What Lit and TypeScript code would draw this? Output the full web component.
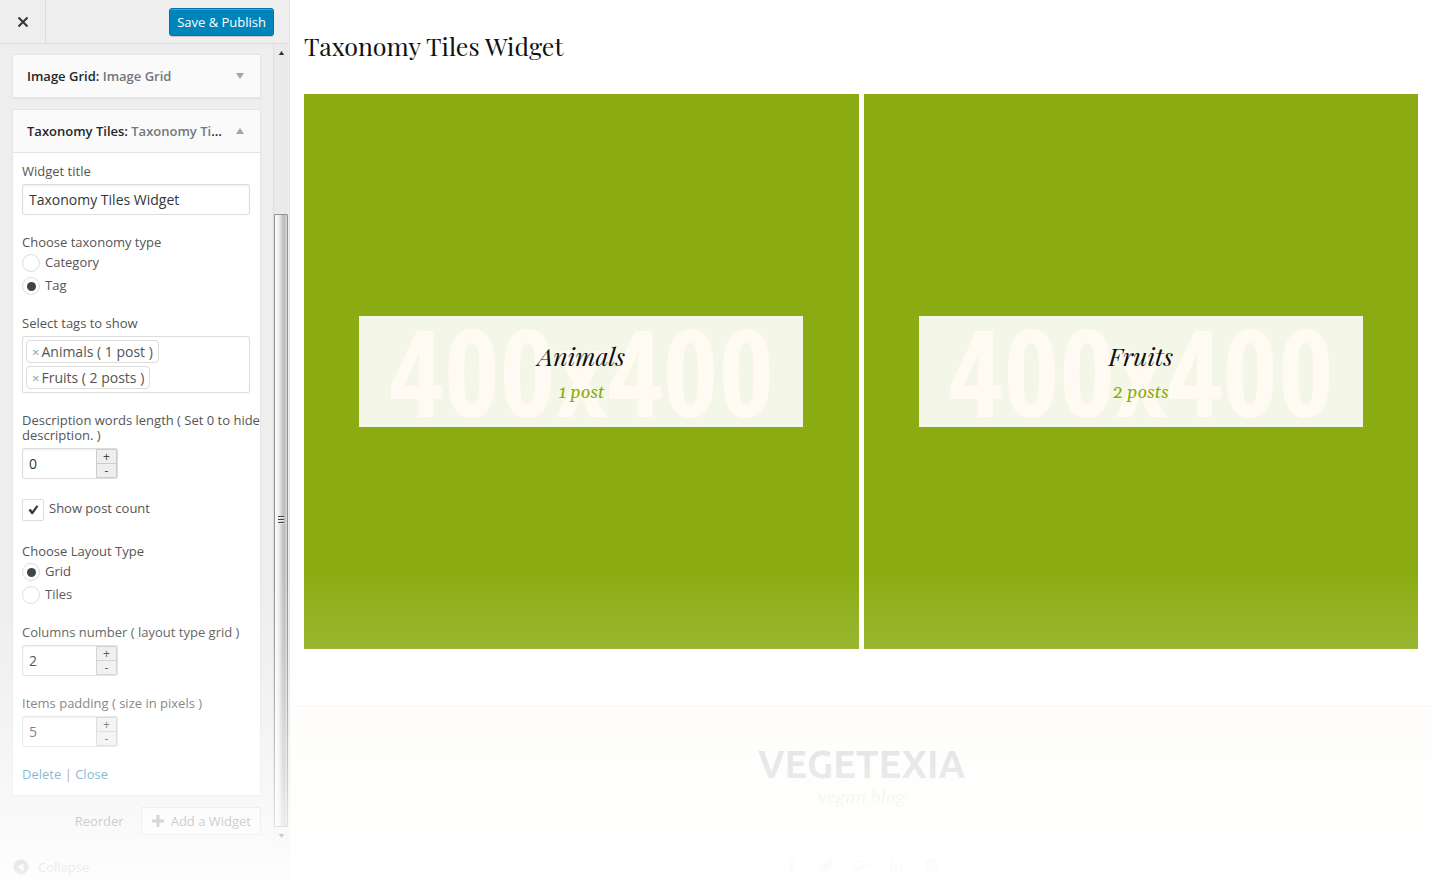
import { LitElement, html, css, svg } from "lit";
import { customElement, property } from "lit/decorators.js";

const base = css`
  *, *::before, *::after { box-sizing: border-box; }
  button, input { font: inherit; margin: 0; }
  a { text-decoration: none; }
`;

@customElement("number-field")
class NumberField extends LitElement {
  @property() label = "";
  @property({ type: Number }) value = 0;

  static styles = [base, css`
    :host { display: block; }
    .label { display: block; line-height: 15px; margin-bottom: 5px; }
    .box { display: flex; width: 96px; height: 31px; border: 1px solid #ddd; border-radius: 2px; background: #fff; box-shadow: inset 0 1px 2px rgba(0, 0, 0, 0.07); }
    .value { flex: 1; min-width: 0; border: 0; background: none; padding: 0 6px; font-size: 14px; color: #32373c; appearance: textfield; outline: none; }
    .value::-webkit-inner-spin-button { appearance: none; margin: 0; }
    .steps { display: flex; flex-direction: column; width: 21px; border: 1px solid #ccc; border-radius: 0 2px 2px 0; }
    .step { flex: 1; border: 0; padding: 0; background: #eee; font-size: 12px; line-height: 12px; color: #444; }
    .step + .step { border-top: 1px solid #ccc; }
  `];

  private step(by: number) { this.value = this.value + by; }

  render() {
    return html`
      <label class="label" for="value">${this.label}</label>
      <div class="box">
        <input class="value" id="value" type="number" .value=${String(this.value)} />
        <div class="steps">
          <button class="step" @click=${() => this.step(1)}>+</button>
          <button class="step" @click=${() => this.step(-1)}>-</button>
        </div>
      </div>`;
  }
}

@customElement("taxonomy-tile")
class TaxonomyTile extends LitElement {
  @property() name = "";
  @property() count = "";

  static styles = [base, css`
    :host { display: block; }
    .tile { display: grid; place-items: center; aspect-ratio: 1; background: #8aac12; overflow: hidden; }
    .size, .card { grid-area: 1 / 1; }
    .size { font: bold 120px/1 "Open Sans Condensed", "Roboto Condensed", "Ubuntu Condensed", "Liberation Sans Narrow", "Liberation Sans", sans-serif; color: #ffc87d; }
    .card { z-index: 1; display: flex; flex-direction: column; align-items: center; justify-content: center; width: 80%; height: 20%; padding-top: 8px; background: rgba(255, 255, 255, 0.9); }
    .name { margin: 0; font: italic 25px/36px "Playfair Display", "Liberation Serif", serif; color: #111; }
    .count { font: italic 18px/38px Georgia, Gelasio, "Liberation Serif", serif; color: #8aac12; }
  `];

  render() {
    return html`
      <article class="tile">
        <span class="size">400x400</span>
        <div class="card">
          <h3 class="name">${this.name}</h3>
          <a class="count" href="#">${this.count}</a>
        </div>
      </article>`;
  }
}

@customElement("widget-panel")
class WidgetPanel extends LitElement {
  static styles = [base, css`
    :host { display: flex; flex-direction: column; background: #eee; color: #555; font: 13px/16px "Open Sans", sans-serif; }
    .top { display: flex; align-items: center; justify-content: space-between; height: 44px; border-bottom: 1px solid #ddd; padding-right: 15px; }
    .close { display: grid; place-items: center; width: 46px; height: 43px; border: 0; border-right: 1px solid #ddd; background: none; padding: 0; }
    .save { height: 28px; padding: 0 7px; border: 1px solid #0073aa; border-radius: 3px; background: #0085ba; box-shadow: inset 0 1px 0 rgba(120, 200, 230, 0.5), 0 1px 0 rgba(0, 0, 0, 0.15); color: #fff; line-height: 26px; }
    .area { flex: 1; display: flex; }
    .list { flex: 1; min-width: 0; padding: 10px 12px 8px 12px; }
    .widget { border: 1px solid #e5e5e5; background: #fff; box-shadow: 0 1px 1px rgba(0, 0, 0, 0.04); margin-bottom: 11px; }
    .head { display: flex; align-items: center; justify-content: space-between; width: 100%; height: 42px; border: 0; padding: 0 16px 0 14px; background: #fafafa; text-align: left; font-weight: 600; color: #23282d; }
    .head.open { height: 43px; border-bottom: 1px solid #e5e5e5; }
    .title { width: 196px; overflow: hidden; text-overflow: ellipsis; white-space: nowrap; }
    .sub { color: #72777c; }
    .form { display: flex; flex-direction: column; gap: 20px; padding: 11px 0 13px 9px; }
    .group { margin: 0; padding: 0; border: 0; min-width: 0; }
    .label { display: block; padding: 0; line-height: 15px; margin-bottom: 5px; }
    .text, .tags { width: 100%; max-width: 228px; }
    .text { display: block; height: 31px; border: 1px solid #ddd; border-radius: 2px; padding: 0 6px; font-size: 14px; color: #32373c; box-shadow: inset 0 1px 2px rgba(0, 0, 0, 0.07); outline: none; }
    legend.label { margin-bottom: 3px; }
    .options { display: grid; gap: 3px; }
    .option { display: flex; gap: 5px; line-height: 18px; height: 20px; }
    .radio { appearance: none; display: grid; place-items: center; width: 18px; height: 18px; margin-top: 1px; border: 1px solid #ddd; border-radius: 50%; background: #fff; }
    .radio:checked::before { content: ""; width: 9px; height: 9px; border-radius: 50%; background: #444; }
    .tags { display: flex; flex-direction: column; align-items: flex-start; gap: 3px; border: 1px solid #ddd; border-radius: 2px; padding: 3px; height: 57px; }
    .tag { display: flex; align-items: center; gap: 2px; height: 23px; padding: 0 5px; border: 1px solid #ddd; border-radius: 4px; font-size: 14px; }
    .remove { border: 0; padding: 0; background: none; color: #999; font-size: 13px; }
    .check-row { display: flex; gap: 5px; height: 25px; line-height: 18px; }
    .check { position: relative; width: 22px; height: 22px; }
    .tick { appearance: none; display: block; width: 22px; height: 22px; border: 1px solid #ddd; border-radius: 2px; background: #fff; }
    .mark { position: absolute; inset: 0; pointer-events: none; }
    .links { line-height: 15px; }
    .link { color: #0073aa; }
    .actions { display: flex; align-items: center; justify-content: flex-end; gap: 17px; }
    .reorder { border: 0; background: none; padding: 0; color: #555; }
    .add { display: flex; align-items: center; gap: 6px; height: 28px; padding: 0 9px 0 9px; border: 1px solid #ccc; border-radius: 2px; background: #f7f7f7; color: #555; }
    .bar { display: flex; flex-direction: column; align-items: center; width: 16px; margin-bottom: 4px; background: #eaeaea; border-left: 1px solid #ddd; border-right: 1px solid #eee; }
    .arrow { display: grid; place-items: center; width: 14px; height: 17px; }
    .before { flex: 1; }
    .thumb { flex: 4; display: grid; place-items: center; width: 14px; border: 1px solid #929292; border-radius: 1px; background: linear-gradient(90deg, #fdfdfd, #ececee 35%, #c9c9cb 60%, #bcbcbe 80%, #dedee0); }
    .foot { display: flex; align-items: center; height: 38px; }
    .collapse { display: flex; align-items: center; gap: 9px; border: 0; background: none; padding: 0 13px; color: #72777c; }
  `];

  private radio(group: string, text: string, checked: boolean) {
    return html`<label class="option"><input class="radio" type="radio" name=${group} ?checked=${checked} />${text}</label>`;
  }

  private triangle(up: boolean, w: number, h: number, color: string) {
    return svg`<svg width=${w} height=${h} viewBox="0 0 8 6"><path d=${up ? "M0 6L4 0L8 6Z" : "M0 0H8L4 6Z"} fill=${color} /></svg>`;
  }

  render() {
    return html`
      <header class="top">
        <button class="close" aria-label="Close">
          <svg width="12" height="12" viewBox="0 0 12 12"><path d="M1.5 1.5L10.5 10.5M10.5 1.5L1.5 10.5" stroke="#32373c" stroke-width="2" /></svg>
        </button>
        <button class="save">Save &amp; Publish</button>
      </header>
      <div class="area">
        <div class="list">
          <section class="widget">
            <button class="head"><span class="title">Image Grid: <span class="sub">Image Grid</span></span>${this.triangle(false, 8, 6, "#a0a5aa")}</button>
          </section>
          <section class="widget">
            <button class="head open"><span class="title">Taxonomy Tiles: <span class="sub">Taxonomy Tiles Widget</span></span>${this.triangle(true, 8, 6, "#a0a5aa")}</button>
            <div class="form">
              <div class="group">
                <label class="label" for="title">Widget title</label>
                <input class="text" id="title" type="text" value="Taxonomy Tiles Widget" />
              </div>
              <fieldset class="group">
                <legend class="label">Choose taxonomy type</legend>
                <div class="options">${this.radio("taxonomy", "Category", false)}${this.radio("taxonomy", "Tag", true)}</div>
              </fieldset>
              <div class="group">
                <span class="label">Select tags to show</span>
                <div class="tags">
                  <span class="tag"><button class="remove">×</button>Animals ( 1 post )</span>
                  <span class="tag"><button class="remove">×</button>Fruits ( 2 posts )</span>
                </div>
              </div>
              <number-field label="Description words length ( Set 0 to hide description. )" .value=${0}></number-field>
              <label class="check-row">
                <span class="check">
                  <input class="tick" type="checkbox" checked />
                  <svg class="mark" viewBox="0 0 22 22"><path d="M6.5 11.2L8.5 9.8L10.3 12L14.6 6.2L16.4 7.3L10.8 15.3H9.7Z" fill="#32373c" /></svg>
                </span>
                Show post count
              </label>
              <fieldset class="group">
                <legend class="label">Choose Layout Type</legend>
                <div class="options">${this.radio("layout", "Grid", true)}${this.radio("layout", "Tiles", false)}</div>
              </fieldset>
              <number-field label="Columns number ( layout type grid )" .value=${2}></number-field>
              <number-field label="Items padding ( size in pixels )" .value=${5}></number-field>
              <div class="links"><a class="link" href="#">Delete</a> | <a class="link" href="#">Close</a></div>
            </div>
          </section>
          <div class="actions">
            <button class="reorder">Reorder</button>
            <button class="add">
              <svg width="14" height="14" viewBox="0 0 14 14"><path d="M7 1V13M1 7H13" stroke="#72777c" stroke-width="3" /></svg>
              Add a Widget
            </button>
          </div>
        </div>
        <div class="bar">
          <span class="arrow">${this.triangle(true, 7, 4, "#333")}</span>
          <span class="before"></span>
          <span class="thumb"><svg width="8" height="8" viewBox="0 0 8 8"><path d="M1 .5H7M1 3.5H7M1 6.5H7" stroke="#444" /><path d="M1 1.5H7M1 4.5H7M1 7.5H7" stroke="#eee" /></svg></span>
          <span class="arrow">${this.triangle(false, 7, 4, "#333")}</span>
        </div>
      </div>
      <footer class="foot">
        <button class="collapse">
          <svg width="16" height="16" viewBox="0 0 16 16"><circle cx="8" cy="8" r="7.5" fill="#72777c" /><path d="M10.5 4V12L4.5 8Z" fill="#eee" /></svg>
          Collapse
        </button>
      </footer>`;
  }
}

@customElement("app-root")
class AppRoot extends LitElement {
  static styles = [base, css`
    :host { position: relative; display: flex; min-height: 100vh; background: #fff; overflow: hidden; }
    .panel { flex: 0 0 289px; }
    .preview { flex: 1; min-width: 0; display: flex; flex-direction: column; border-left: 1px solid #e4e4e4; }
    .content { padding: 27px 15px 56px 14px; }
    .heading { margin: 0 0 29px; font: 25px/38px "Playfair Display", "Liberation Serif", serif; color: #111; }
    .tiles { display: grid; grid-template-columns: 1fr 1fr; gap: 5px; }
    .site-foot { flex: 1; display: flex; flex-direction: column; border-top: 2px solid #faf9f5; }
    .site-id { display: flex; flex-direction: column; align-items: center; background: #fefdfa; padding: 37px 0 40px; }
    .brand { font: bold 38px/40px Ubuntu, "Noto Sans", sans-serif; color: #d3d3d6; }
    .tagline { font: italic 18px/28px Georgia, Gelasio, "Liberation Serif", serif; color: #ebebd5; }
    .social { display: flex; justify-content: center; gap: 20px; padding-top: 6px; }
    .icon { display: block; width: 15px; height: 15px; fill: #e6e6e6; }
    .fade { position: absolute; z-index: 2; inset: auto 0 0 0; height: 316px; pointer-events: none; background: linear-gradient(rgba(255, 255, 255, 0), rgba(255, 255, 255, 0.13) 25%, rgba(255, 255, 255, 0.5) 64%, rgba(255, 255, 255, 0.7) 80%, rgba(255, 255, 255, 0.85) 94%, rgba(255, 255, 255, 0.95)); }
  `];

  private icons = [
    "M11 1.2V3.4H9.8Q8.7 3.4 8.7 4.5V6H11L10.7 8.4H8.7V14.5H6.2V8.4H4V6H6.2V4.2Q6.2 1 9.2 1Z",
    "M14.5 3.4L13 4.9Q13 13.5 5.2 13.5Q2.5 13.5.6 12.3Q3 12.4 4.8 11.1Q2.8 10.9 2.1 9.1H3.4Q1 8.2 1.1 6L2.4 6.3Q.5 4.6 1.6 2.5Q4 5.3 7.5 5.5Q7.2 2 10.2 2Q11.4 2 12.2 2.9L14 2.2L12.9 3.8Z",
    "M5 6.5H9.6Q10.2 12.5 5 12.7A5.2 5.2 0 1 1 8.5 3.6L7.1 5A3.2 3.2 0 1 0 7.5 8.4H5ZM12 5.5H13.4V7H15V8.4H13.4V10H12V8.4H10.5V7H12Z",
    "M1 5.3H4V14H1ZM2.5 1A1.5 1.5 0 1 1 2.4 1ZM5.5 5.3H8.4V6.5Q9.3 5.1 11 5.1Q14.3 5.1 14.3 9V14H11.4V9.4Q11.4 7.5 10 7.5Q8.4 7.5 8.4 9.4V14H5.5Z",
    "M7.5 .8A6.7 6.7 0 1 1 5.5 13.9Q6.3 12.6 7 9.6Q7.7 10.5 9 10.2Q11.6 9.3 11.4 6Q10.7 3.2 7.6 3.2Q3.9 3.5 3.8 6.8Q3.9 8.4 5 8.9L5.4 7.8Q4.3 4.9 7.4 4.4Q10 4.5 9.8 7Q9.2 9.4 8 9Q7 8.7 7.9 6.1Q7.5 4.6 6.3 6.2L5.1 12Q4.8 13 4.9 13.6A6.7 6.7 0 0 1 7.5 .8Z",
  ];

  render() {
    return html`
      <widget-panel class="panel"></widget-panel>
      <main class="preview">
        <section class="content">
          <h2 class="heading">Taxonomy Tiles Widget</h2>
          <div class="tiles">
            <taxonomy-tile name="Animals" count="1 post"></taxonomy-tile>
            <taxonomy-tile name="Fruits" count="2 posts"></taxonomy-tile>
          </div>
        </section>
        <footer class="site-foot">
          <div class="site-id">
            <div class="brand">VEGETEXIA</div>
            <div class="tagline">vegan blog</div>
          </div>
          <div class="social">${this.icons.map((d) => html`<svg class="icon" viewBox="0 0 15 15"><path d=${d} /></svg>`)}</div>
        </footer>
      </main>
      <div class="fade"></div>`;
  }
}
